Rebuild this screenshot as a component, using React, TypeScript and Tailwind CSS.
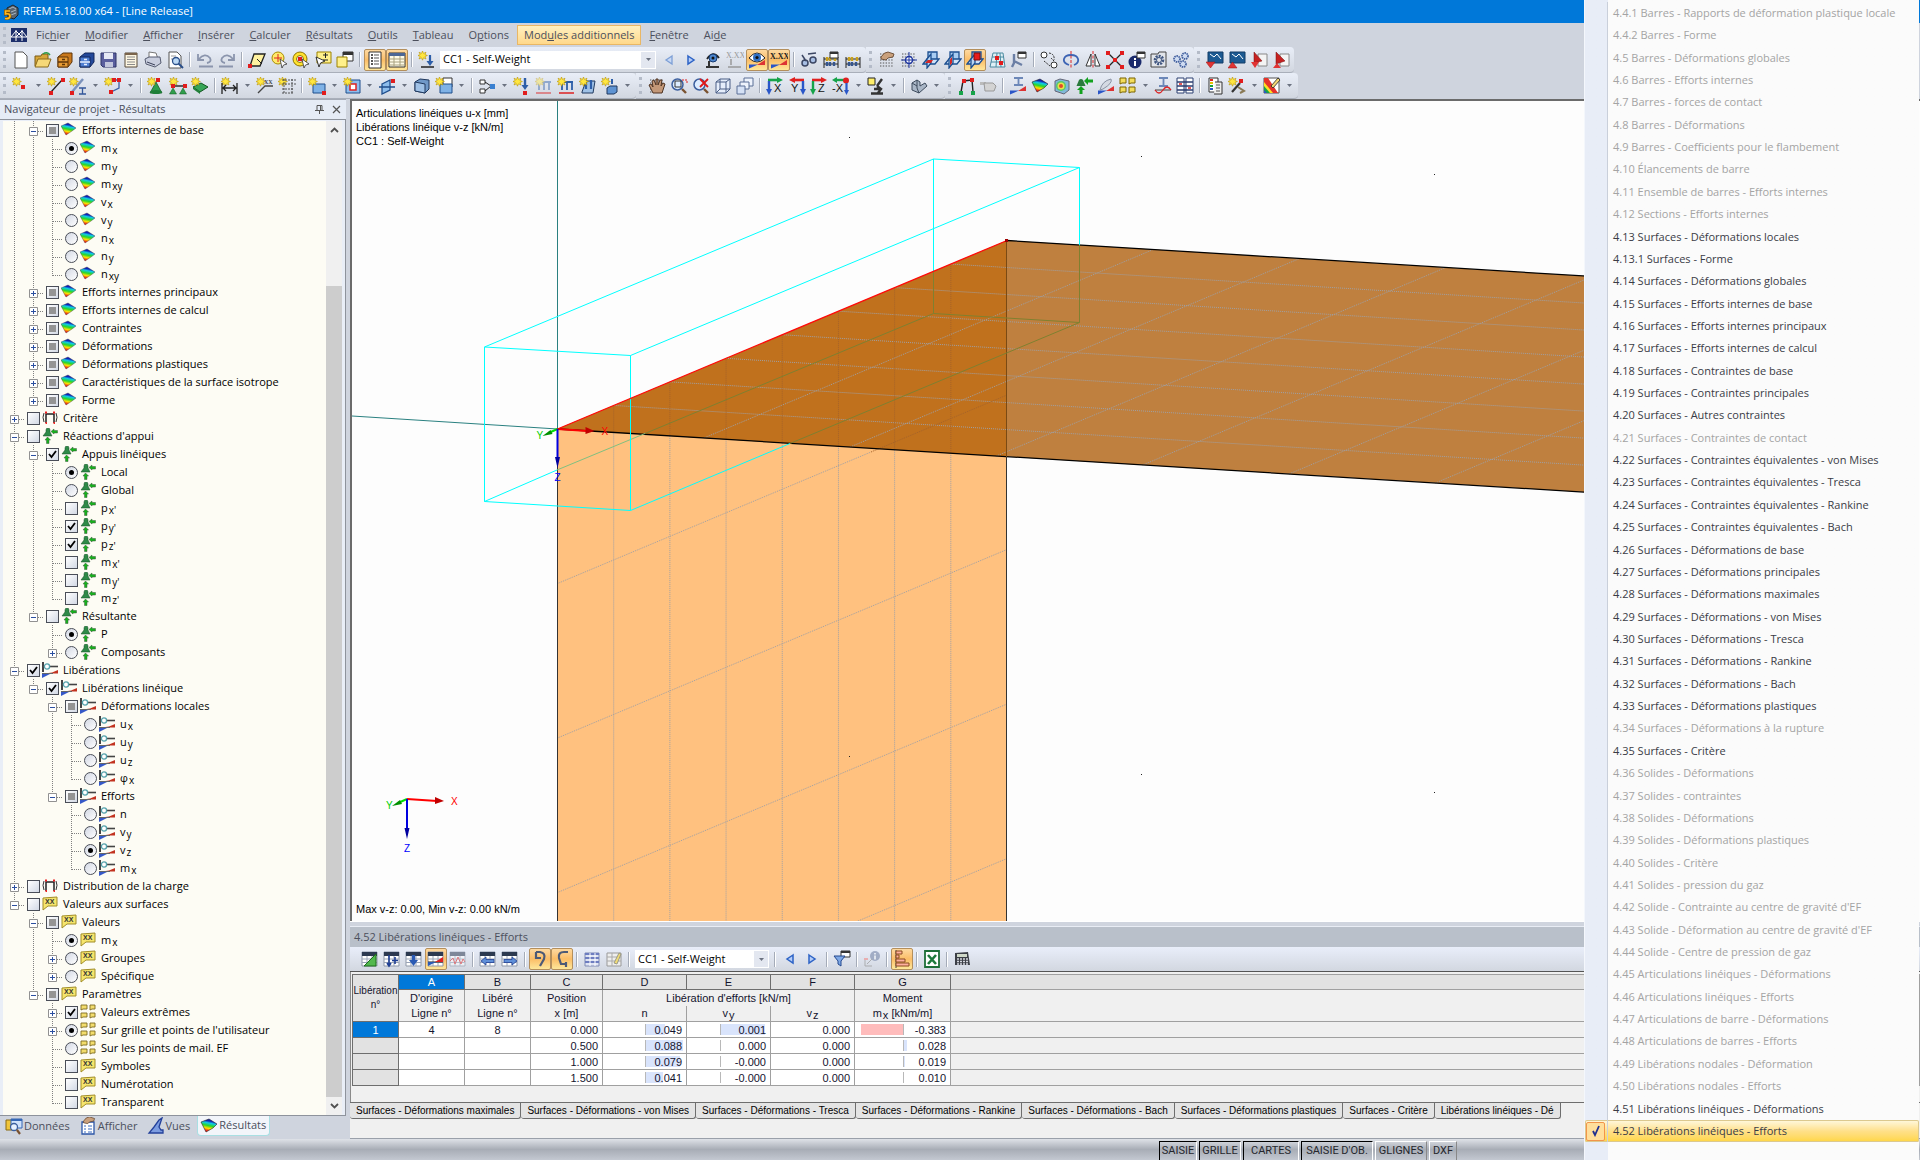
import React from 'react';
import clsx from 'clsx';

/* ---------- shared drawing bits ---------- */

const star = (
    <path d="M4.5 0l1 2.4L8 1.2 7 3.6 9.4 4.5 7 5.5 8 8 5.5 6.8 4.5 9.2 3.5 6.8 1 8 2.2 5.5 0 4.5l2.2-1L1 1.2l2.5 1.2z" fill="#ffe640" stroke="#b89400" strokeWidth=".6" />
);
const dot = (x: number, y: number, c = '#e11d1d') => <rect x={x} y={y} width="4" height="4" fill={c} />;
const page = <path d="M3 1h8l4 4v12H3z" fill="#fff" stroke="#555" />;
const dots = <path d="M2 3h14M2 6h14M2 9h14M2 12h14M2 15h14" stroke="#555" strokeWidth="1.2" strokeDasharray="1.4 1.4" />;
const hand = <path d="M3 6q3-5 7-5l6 2-1 3-5 1-2 2-5-1z" fill="#c9a07c" stroke="#5a3c26" strokeWidth=".8" />;
const lens = (
    <>
        <path d="M12 12l4 4" stroke="#7a5230" strokeWidth="2.4" />
        <circle cx="7.5" cy="7.5" r="5.5" fill="#dcecff" stroke="#3c5f9e" strokeWidth="1.500" />
    </>
);
const planes = (
    <>
        <path d="M6 1h9v9H6z" fill="#a9cdf2" stroke="#1c4f90" strokeWidth="1.300" />
        <path d="M1 13l4-5h12l-4 5z" fill="#cfe2f8" stroke="#1c4f90" strokeWidth="1.300" />
        <path d="M9 3L5 8v9l4-5z" fill="#b8d4f2" stroke="#1c4f90" strokeWidth="1.300" />
    </>
);
const tableBase = (
    <>
        <path d="M1 2h15v14H1z" fill="#fff" stroke="#8d97a8" />
        <path d="M1 2h15v4H1z" fill="#2c3950" />
        <path d="M1 9h15M1 12.500h15M6 6v10M11 6v10" stroke="#9aa4b6" />
    </>
);
const wall = (c: string, s: string) => <path d="M5 7h12v9H5z" fill={c} stroke={s} />;
const abacus = (
    <>
        <path d="M2 6v11M16 6v11M2 8h14M2 13h14" stroke="#222" fill="none" />
        <path d="M5 6v4M8 6v4M13 6v4" stroke="#c9a11b" strokeWidth="2.400" />
        <path d="M5 11v4M8 11v4M12 11v4" stroke="#35558e" strokeWidth="2.400" />
    </>
);
const bridge = <path d="M2 1h15v11H2z" fill="#1c5a92" stroke="#123c66" />;
const axisLetter = (letter: string, x: number) => (
    <text x={x} y="15" fontSize="11" fill="#111" fontFamily="Liberation Sans">{letter}</text>
);
const viewAxes = (letter: string, a: string, b: string) => (
    <>
        <path d="M2 3h10" stroke={a} strokeWidth="2.600" />
        <path d="M11 0l6 3-6 3z" fill={a} />
        <path d="M3 4v9" stroke={b} strokeWidth="2.400" />
        <path d="M0 12h6l-3 6z" fill={b} />
        {axisLetter(letter, 8)}
    </>
);
const supportCone = (
    <>
        <path d="M9 5l6 11H3z" fill="#2f9e4c" stroke="#11551f" strokeWidth=".7" />
        <ellipse cx="9" cy="15" rx="6" ry="2" fill="#1f7f38" />
    </>
);
const diag = (
    <>
        <path d="M1 14h8l8-5v5z" fill="#d33" />
        <path d="M1 13.500h9l-9 4z" fill="#2a55c8" />
    </>
);

const ICONS: Record<string, React.ReactNode> = {
    new: page,
    open: <><path d="M1 5h6l1-2h6v12H1z" fill="#d7a63a" stroke="#7a5b16" /><path d="M4 8h13l-3 8H1z" fill="#f6d878" stroke="#8a6a1c" /><path d="M9 3q4-3 7 1" fill="none" stroke="#2f9e4c" strokeWidth="1.500" /></>,
    block: <><path d="M2 6l5-4h9v9l-4 5H2z" fill="#c9781c" stroke="#5e3508" /><path d="M2 6h10v10H2z" fill="#e79b34" stroke="#5e3508" /><path d="M2 11h10M6 8.500h3M6 13.500h3" stroke="#5e3508" strokeWidth="1.300" /></>,
    blockBlue: <><path d="M2 6l5-4h9v9l-4 5H2z" fill="#23489a" stroke="#12265a" /><path d="M2 6h10v10H2z" fill="#4f7fd2" stroke="#12265a" /><path d="M2 11h10M6 8.500h3M6 13.500h3" stroke="#e8efff" strokeWidth="1.300" /></>,
    save: <><path d="M1 2h15v14H3l-2-2z" fill="#5a5f9e" stroke="#2f3468" /><path d="M4 2h9v6H4z" fill="#e6e9f5" /><path d="M5 11h8v5H5z" fill="#c2c6dc" /></>,
    notes: <><path d="M3 2h12v14H3z" fill="#fdf6e2" stroke="#594a38" /><path d="M3 2h12v2H3z" fill="#7a644c" /><path d="M5 6h8M5 8.500h8M5 11h8M5 13.500h8" stroke="#8b8b8b" /></>,
    print: <><path d="M5 1l7 1 2 6H5z" fill="#fff" stroke="#777" /><path d="M1 8l4-2h11l1 6-6 4-9-3z" fill="#c9cede" stroke="#555b70" /><path d="M3 11l8 3" stroke="#3a4058" /></>,
    preview: <>{page}<path d="M5 5h5M5 8h4" stroke="#999" /><circle cx="10" cy="10" r="3.500" fill="#bcd9f5" stroke="#2a4f8a" strokeWidth="1.300" /><path d="M12.500 12.500L17 17" stroke="#2a4f8a" strokeWidth="2" /></>,
    undo: <path d="M2 3v6h6M2.500 8.500Q9 1 14 7q2 4-3 5M3 15.500h14" fill="none" stroke="#8b95ad" strokeWidth="1.800" />,
    redo: <path d="M16 3v6h-6M15.500 8.500Q9 1 4 7q-2 4 3 5M1 15.500h14" fill="none" stroke="#8b95ad" strokeWidth="1.800" />,
    quad: <><path d="M6 3h11l-5 12H2z" fill="#fff2a0" stroke="#222" strokeWidth="1.300" />{dot(0, 13)}<path d="M9 8l5 5" stroke="#222" /></>,
    lasso: <><circle cx="8" cy="7" r="6" fill="#ffe96a" stroke="#a88b00" /><path d="M8 3v8M4 7h8" stroke="#d22" /><path d="M10 8l2 9 1.500-3 3.500-1z" fill="#fff" stroke="#333" strokeWidth=".8" /></>,
    ring: <><circle cx="8" cy="8" r="7" fill="#ffe22e" stroke="#8f7500" /><circle cx="8" cy="8" r="3.500" fill="#eef1f8" stroke="#8f7500" />{dot(6, 6)}<path d="M10 8l2 9 1.500-3 3.500-1z" fill="#fff" stroke="#333" strokeWidth=".8" /></>,
    pick: <><path d="M3 1h14v11H3z" fill="#fff08a" stroke="#9c8200" /><path d="M9 4h5M11.500 2v5M9 9h5" stroke="#222" /><path d="M2 6l3 10 1.500-4L11 10z" fill="#fff" stroke="#222" strokeWidth=".9" /></>,
    cascade: <><path d="M7 1h10v9H7z" fill="#fff" stroke="#333" /><path d="M7 1h10v3H7z" fill="#333" /><path d="M1 6h10v10H1z" fill="#fff08a" stroke="#9c8200" /></>,
    list: <><path d="M3 1h12v16H3z" fill="#fff" stroke="#333" /><path d="M5 4h2M5 7h2M5 10h2M5 13h2" stroke="#222" strokeWidth="1.600" /><path d="M8 4h5M8 7h5M8 10h5M8 13h5" stroke="#555" /></>,
    table: <><path d="M1 2h16v14H1z" fill="#fffbe6" stroke="#333" /><path d="M1 2h16v3H1z" fill="#4c6796" /><path d="M1 8h16M1 11h16M1 14h16M6 5v11M12 5v11" stroke="#a8a17e" /></>,
    loadNew: <>{star}<path d="M12 4v8" stroke="#2d5ea8" strokeWidth="2.200" /><path d="M8.500 10h7L12 15z" fill="#2d5ea8" /><path d="M3 16h13" stroke="#222" strokeWidth="1.500" /></>,
    prev: <path d="M12 5L6 9l6 4z" fill="#c8d9f5" stroke="#7d9fd6" strokeWidth="1.300" />,
    next: <path d="M6 5l6 4-6 4z" fill="#b5cdf8" stroke="#2d63c6" strokeWidth="1.500" />,
    prevBlue: <path d="M12 5L6 9l6 4z" fill="#b5cdf8" stroke="#2d63c6" strokeWidth="1.500" />,
    eyeLoad: <><path d="M3 8q6-9 12-1" fill="none" stroke="#222" strokeWidth="1.800" /><circle cx="9" cy="7" r="4" fill="#4d86ce" stroke="#153a70" /><circle cx="9" cy="7" r="1.500" fill="#111" /><path d="M5 10v6M2 16h13" stroke="#333" strokeWidth="2" /></>,
    xxGrey: <><text x="0" y="7" fontSize="8" fill="#999" fontFamily="Liberation Serif">X.XX</text><path d="M5 8v6M2 16h13" stroke="#999" strokeWidth="1.500" /></>,
    eye: <><path d="M1 7q8-10 16 0-8 8-16 0z" fill="#fff" stroke="#222" /><circle cx="9" cy="6.500" r="4" fill="#2f6fc4" /><circle cx="9" cy="6.500" r="1.600" fill="#111" />{diag}</>,
    xx: <><text x="0" y="8" fontSize="8" fontWeight="700" fill="#222" fontFamily="Liberation Serif">X.XX</text>{diag}</>,
    glasses: <path d="M2 4l4 6M8 3l8-1M2 12a3 3 0 1 0 6 0a3 3 0 1 0-6 0M10 9a3 3 0 1 0 6 0a3 3 0 1 0-6 0" fill="#a8bfe4" stroke="#3b4663" strokeWidth="1.500" />,
    abacusWin: <>{abacus}<path d="M8 1h8v6H8z" fill="#fff" stroke="#333" /><path d="M8 2h8" stroke="#333" strokeWidth="2" /></>,
    abacus,
    handGrid: <>{dots}{hand}</>,
    snap: <>{dots}<circle cx="9" cy="9" r="3.500" fill="#fff" stroke="#1e36a0" strokeWidth="1.500" /><path d="M9 1v16M1 9h16" stroke="#1e36a0" /></>,
    planeXY: <>{planes}<path d="M3 12l3-3h5l-2 3z" fill="#d42626" /></>,
    planeXZ: <>{planes}<path d="M8 6L6 8.500v6L8 12z" fill="#d42626" /></>,
    planeYZ: <>{planes}<path d="M8 2h6v7H8z" fill="#e81c1c" stroke="#7a1010" /></>,
    raster: <><path d="M5 2h10l2 14H2z" fill="#dff0f6" stroke="#4a8aa0" /><path d="M4 6h12M3 11h13M9 2L8 16M12 2l1 14" stroke="#4a8aa0" />{dot(7, 5)}{dot(11, 10)}</>,
    tools: <><path d="M8 1h8v6H8z" fill="#fff" stroke="#333" /><path d="M8 2h8" stroke="#333" strokeWidth="2" /><path d="M4 3v9l-2 4M4 10l8 4" fill="none" stroke="#6b7fa5" strokeWidth="2.400" /></>,
    move: <><circle cx="4" cy="4" r="3" fill="#fff" stroke="#333" /><circle cx="14" cy="14" r="3" fill="#fff" stroke="#333" /><path d="M9 2q6 1 5 7M14 10l-3-3M4 10l6 5" fill="none" stroke="#333" strokeDasharray="2 1" /></>,
    rotate: <><path d="M7 14Q1 12 2 8t7-4 7 4-4 6" fill="none" stroke="#3d64b4" strokeWidth="1.800" /><path d="M9 0v18" stroke="#d22" strokeDasharray="3 1.500" /></>,
    mirror: <><path d="M7 3v12H2zM11 3v12h5z" fill="#fff" stroke="#333" /><path d="M9 0v18" stroke="#d22" strokeDasharray="3 1.500" /></>,
    explode: <><path d="M2 2l14 14M16 2L2 16" stroke="#222" strokeWidth="1.300" />{dot(0, 0)}{dot(14, 0)}{dot(0, 14)}{dot(14, 14)}{dot(7, 7)}</>,
    info: <><circle cx="7" cy="11" r="6.500" fill="#1a2a6c" /><path d="M9 1h8v6H9z" fill="#fff" stroke="#333" /><path d="M9 2h8" stroke="#333" strokeWidth="2" /><path d="M7 7v2M7 10v5" stroke="#fff" strokeWidth="2" /></>,
    gearBox: <><path d="M1 3h7l1-2h7v15H1z" fill="#e2e5ea" stroke="#444" /><circle cx="9" cy="9" r="4" fill="none" stroke="#3f5580" strokeWidth="2.600" strokeDasharray="2 1" /><circle cx="9" cy="9" r="2.500" fill="none" stroke="#3f5580" /></>,
    gears: <g fill="#cfdcf2" stroke="#4562a0" strokeWidth="1.800" strokeDasharray="1.500 .7"><circle cx="5" cy="8" r="3" /><circle cx="13" cy="5" r="3" /><circle cx="11" cy="13" r="3" /></g>,
    exportDown: <>{bridge}<path d="M4 3l4 3 3-3 4 5" stroke="#fff" fill="none" /><path d="M0 11h9l-4.500 6z" fill="#e03434" stroke="#911" strokeWidth=".5" /></>,
    exportUp: <>{bridge}<path d="M4 3l4 3 3-3 4 5" stroke="#fff" fill="none" /><path d="M0 17h9l-4.500-6z" fill="#e03434" stroke="#911" strokeWidth=".5" /></>,
    pdfDown: <><path d="M8 3h9v12H8z" fill="#f4f4f4" stroke="#888" /><path d="M4 1l8 9-8 2z" fill="#c62121" stroke="#711" strokeWidth=".5" /><path d="M1 11h8l-4 6z" fill="#e03434" /></>,
    pdfUp: <><path d="M8 3h9v12H8z" fill="#f4f4f4" stroke="#888" /><path d="M4 1l9 9-9 3z" fill="#c62121" stroke="#711" strokeWidth=".5" /><path d="M1 17h8l-4-5z" fill="#e03434" /></>,

    node: <>{star}{dot(9, 8)}</>,
    line: <>{star}<path d="M4 15L15 3" stroke="#222" strokeWidth="1.300" />{dot(2, 14)}{dot(14, 1)}</>,
    member: <>{star}<path d="M3 15L14 2" stroke="#7b92bb" strokeWidth="2.500" />{dot(1, 14)}<path d="M10 11h7M13.500 11v6M10 17h7" stroke="#33579a" strokeWidth="1.300" /></>,
    polyline: <>{star}<path d="M10 3h5v8l-8 4" fill="none" stroke="#3a5fa5" strokeWidth="1.300" />{dot(8, 1)}{dot(13, 1)}{dot(5, 13)}</>,
    nodeSupport: <>{supportCone}{star}{dot(9, 1)}</>,
    lineSupport: <>{star}<path d="M4 9h12" stroke="#222" strokeWidth="1.400" />{dot(2, 7)}{dot(14, 7)}<path d="M4 11l3.500 6h-7zM14 11l3.500 6h-7z" fill="#2f9e4c" stroke="#12561f" strokeWidth=".5" /></>,
    surfSupport: <><path d="M2 10l8-4 7 4-8 5z" fill="#37a556" stroke="#12561f" /><path d="M2 10v2l7 5v-2z" fill="#1f7f38" />{star}</>,
    dimension: <>{star}<path d="M1 6v11M16 6v11M2 11h13M5 8l-3 3 3 3M12 8l3 3-3 3" fill="none" stroke="#222" strokeWidth="1.300" /></>,
    comment: <>{star}<text x="8" y="7" fontSize="6" fontWeight="700" fill="#444" fontFamily="Liberation Serif">XX</text><path d="M2 16L9 9h8" fill="none" stroke="#444" strokeWidth="1.300" /></>,
    guide: <>{star}<path d="M4 3h14M4 7h14M4 12h12M4 16h12M6 2v15M14 2v15" stroke="#444" strokeWidth=".9" strokeDasharray="2 1" /></>,
    surface: <>{wall('#7fb2e6', '#1f4e8c')}{dot(14, 14)}{star}</>,
    opening: <><path d="M3 3h14v13H3z" fill="#8dbdec" stroke="#1f4e8c" /><path d="M7 7h6v6H7z" fill="#fff" stroke="#d22" strokeWidth="1.500" />{star}</>,
    intersect: <><path d="M1 10h16M4 7l8-4v10l-8 4z" fill="#8dbdec" stroke="#1f4e8c" strokeWidth="1.300" />{dot(13, 2)}</>,
    solid: <><path d="M2 5l5-3 9 1v9l-4 4-10-2z" fill="#6f98c8" stroke="#20395e" /><path d="M2 5l10 2v9L2 14z" fill="#9fc1e6" stroke="#20395e" /></>,
    solidSet: <><path d="M8 1h9v9H8z" fill="#fff" stroke="#333" />{wall('#7fb2e6', '#1f4e8c')}{star}</>,
    release: <><path d="M2 3h5v4H2zM2 12h5v4H2z" fill="#fff" stroke="#333" /><path d="M7 5l6 4-6 5" fill="none" stroke="#222" /><path d="M12 7h5v5h-5z" fill="#3a80d0" /></>,
    nodeLoad: <>{star}<path d="M12 1v8" stroke="#2d5ea8" strokeWidth="2.400" /><path d="M8.500 8h7L12 13z" fill="#2d5ea8" />{dot(10, 14)}</>,
    memberLoadGrey: <g opacity=".45"><path d="M2 5h14M4 5v8M9 5v8M14 5v8" stroke="#2d5ea8" strokeWidth="1.800" /><path d="M1 16h15" stroke="#d22" strokeWidth="2" />{star}</g>,
    memberLoad: <><path d="M3 5h13M5 5v8M10 5v8M15 5v8" stroke="#2d5ea8" strokeWidth="1.800" /><path d="M2 16h15" stroke="#d22" strokeWidth="1.500" />{star}</>,
    surfLoad: <><path d="M3 15l4-11h9l-2 12H3z" fill="#9fc1e6" stroke="#20395e" /><path d="M7 3v9M12 3v9" stroke="#2d5ea8" strokeWidth="2.200" />{star}</>,
    solidLoad: <><path d="M6 11l3-2h7v6l-3 2H6z" fill="#5e93d2" stroke="#20395e" />{star}<path d="M11 2v5" stroke="#2d5ea8" strokeWidth="2" /></>,
    pan: <>{dots}<path d="M5 16l-4-8 2-1 2 3-1-6 2-1 2 5V2h2v6l2-5h2l-1 6 2-3 2 1-3 9z" fill="#c39878" stroke="#4e3322" /></>,
    zoomWin: <>{lens}<path d="M5 4h6v6H5z" fill="none" stroke="#333" /><path d="M12 3h5v4" fill="none" stroke="#d22" strokeDasharray="2 1" /></>,
    zoomOff: <>{lens}<path d="M8 2l8 8M16 2L8 10" stroke="#e01818" strokeWidth="1.800" /></>,
    box: <><path d="M2 5l4-3h10v10l-4 4H2z" fill="#e6eefb" stroke="#4a5f86" /><path d="M2 5h10v11M12 5l4-3M6 2v10l-4 4M6 12h10" fill="none" stroke="#4a5f86" /></>,
    boxes: <><path d="M8 1h9v8H8z" fill="#eef3fc" stroke="#5a6f96" /><path d="M4 5h9v7H4z" fill="#eef3fc" stroke="#5a6f96" /><path d="M1 9h8v8H1z" fill="#d5e1f5" stroke="#5a6f96" /></>,
    viewX: viewAxes('X', '#17a34a', '#2b57c8'),
    viewY: (
        <>
            <path d="M6 3h10" stroke="#e02020" strokeWidth="2.600" />
            <path d="M7 0L1 3l6 3z" fill="#e02020" />
            <path d="M15 4v9" stroke="#2b57c8" strokeWidth="2.400" />
            <path d="M12 12h6l-3 6z" fill="#2b57c8" />
            {axisLetter('Y', 3)}
        </>
    ),
    viewZ: viewAxes('Z', '#e02020', '#17a34a'),
    viewMX: (
        <>
            <path d="M3 3h9" stroke="#17a34a" strokeWidth="2.400" />
            <path d="M5 0L0 3l5 3z" fill="#17a34a" />
            <circle cx="14" cy="3.500" r="3" fill="#e02020" />
            <path d="M14.500 6v8" stroke="#2b57c8" strokeWidth="2.200" />
            <path d="M12 13h5l-2.500 5z" fill="#2b57c8" />
            {axisLetter('-X', 0)}
        </>
    ),
    microscope: <><path d="M1 1h7v7H1z" fill="#ffef6a" stroke="#222" /><path d="M15 2l-5 7M10 9l4 3-3 4M4 16.500h12M7 12h6" fill="none" stroke="#333" strokeWidth="2.400" /></>,
    part: <><path d="M2 6l5-3 3 2v4l5-3 2 3-8 7-7-3z" fill="#a9b6c6" stroke="#3d4a5c" /><path d="M7 3v8l2 5M2 6l5 3" fill="none" stroke="#3d4a5c" /></>,
    frame: <><path d="M4 15L6 4l9-1 1 12" fill="none" stroke="#222" strokeWidth="1.400" />{dot(5, 2)}{dot(13, 1)}{dot(2, 14, '#17a34a')}{dot(14, 14, '#17a34a')}</>,
    stone: <><path d="M1 5h6v3H1z" fill="#bbb" /><path d="M5 6h9l3 3-2 5H6z" fill="#d3d3d3" stroke="#999" /></>,
    beamResult: <><path d="M5 1h9M9.500 1v7M5 8h9" stroke="#6c87b8" strokeWidth="1.800" />{diag}</>,
    surfResult: <path d="M1 5l8-3 8 5-4 4-7 4z" fill="url(#rainbow)" stroke="#222" strokeWidth=".6" />,
    solidResult: <><path d="M2 4l5-2 9 2v9l-5 4-9-3z" fill="#7fb8d8" stroke="#667" /><circle cx="8" cy="9" r="5" fill="#57c96a" /><circle cx="8" cy="9" r="3.500" fill="#e9e24a" /><circle cx="8" cy="9" r="2" fill="#e04a2a" /></>,
    supportRes: <><path d="M4 3a2.500 2.500 0 0 1 4 0l2.500 6h-9z" fill="#2b7a3e" /><path d="M12 4h6M6 17v-4" stroke="#13a11f" strokeWidth="3" /><path d="M6 9l4 4H2zM9 4l4-4v8z" fill="#13a11f" /></>,
    section: <><path d="M3 13Q5 4 14 2q2 4-8 10z" fill="#d5dae3" stroke="#8a93a3" />{diag}</>,
    tags4: <g fill="#f3dd5c" stroke="#7a6500"><path d="M1 1h6v5H3l-2 1zM10 1h6v5h-4l-2 1zM1 10h6v5H3l-2 1zM10 10h6v5h-4l-2 1z" /></g>,
    beamWave: <><path d="M5 1h9M9.500 1v8M5 9h9" stroke="#6c87b8" strokeWidth="1.800" /><path d="M1 13h16" stroke="#444" /><path d="M1 13q4 6 8 0t8 0" fill="none" stroke="#d22" strokeWidth="1.300" /></>,
    compare: <><path d="M1 1h7v15H1zM10 1h7v15h-7z" fill="#fff" stroke="#2b3e70" /><path d="M1 5h16M1 9h16M1 13h16" stroke="#2b3e70" strokeWidth="1.500" /><path d="M3 7h3M12 11h3" stroke="#d22" strokeWidth="1.500" /></>,
    colorPanel: <><path d="M3 1h9v14H3z" fill="#fff" stroke="#333" /><path d="M4 3h3" stroke="#d22" strokeWidth="2" /><path d="M4 6h3" stroke="#e6c200" strokeWidth="2" /><path d="M4 9h3" stroke="#19a33c" strokeWidth="2" /><path d="M4 12h3" stroke="#2b57c8" strokeWidth="2" /><path d="M9 5h7v12H8" fill="#eee" stroke="#333" /><path d="M10 8h4M10 11h4M10 14h4" stroke="#555" /></>,
    wizard: <>{star}<path d="M4 15l8-9" stroke="#333" strokeWidth="2.200" /><path d="M10 10l6 4-4 2" stroke="#8a7a55" strokeWidth="2" fill="none" />{dot(11, 2)}</>,
    palette: <><path d="M1 1h15v15H1z" fill="#fff" stroke="#555" /><path d="M1 1h4l10 15H1z" fill="#e6332a" /><path d="M1 5l9 11H1z" fill="#ffe023" /><path d="M1 9l6 7H1z" fill="#17a34a" /><path d="M1 13l3 3H1z" fill="#2b57c8" /><path d="M8 9l7-8 2 2-7 8z" fill="#f4d774" stroke="#222" strokeWidth=".8" /></>,

    tGreen: <>{tableBase}<path d="M3 16L15 4v12z" fill="#52b84e" stroke="#1c6d1d" /></>,
    tSplit: <>{tableBase}<path d="M6 5v11M12 7v7M9 10.500h6M4 13l2 3 2-3" fill="none" stroke="#1f3f94" strokeWidth="1.600" /></>,
    tDown: <>{tableBase}<path d="M8.500 5v6" stroke="#2a5ab4" strokeWidth="3.400" /><path d="M4 10h9l-4.500 6z" fill="#2a5ab4" /></>,
    tDiag: <>{tableBase}<path d="M1 12h15" stroke="#222" /><path d="M8 12l8-5v5z" fill="#d22" /><path d="M1 12h8l-8 4z" fill="#2a5ab4" /></>,
    tWave: <g opacity=".55">{tableBase}<path d="M1 11l3-3 2 6 3-7 3 7 2-5 2 3" fill="none" stroke="#d22" /></g>,
    tLeft: <>{tableBase}<path d="M2 11l5-4v2.500h8v3H7V15z" fill="#5f8fd8" stroke="#1f3f94" strokeWidth=".8" /></>,
    tRight: <>{tableBase}<path d="M16 11l-5-4v2.500H3v3h8V15z" fill="#5f8fd8" stroke="#1f3f94" strokeWidth=".8" /></>,
    hookR: <path d="M5 2h4q6 1 4 7l-4 7M5 2v6h5" fill="none" stroke="#4d5a76" strokeWidth="2.200" />,
    hookL: <path d="M15 2h-4q-6 0-5 6l2 6h5M13 17v-5" fill="none" stroke="#4d5a76" strokeWidth="2.200" />,
    tRows: <><path d="M2 3h14v13H2z" fill="#dfe4f3" stroke="#7f8ab4" /><path d="M2 4h14M2 8h14M2 12h14" stroke="#6d7dc0" strokeWidth="2" /><path d="M7 3v13M12 3v13" stroke="#fff" /></>,
    tEdit: <><path d="M2 3h14v13H2z" fill="#eee" stroke="#999" /><path d="M2 7h14M2 11h14M7 3v13" stroke="#aaa" /><path d="M9 13l5-10 2 1-4 10z" fill="#f1dc76" stroke="#998" /></>,
    filter: <><path d="M8 1h9v6H8z" fill="#fff" stroke="#333" /><path d="M8 2h9" stroke="#333" strokeWidth="2" /><path d="M1 6h11l-4 5v5l-3-2v-3z" fill="#7ea8e6" stroke="#24488e" /></>,
    infoGrey: <g opacity=".7"><circle cx="12" cy="6" r="5" fill="#8795b3" /><path d="M12 3v1.500M12 5.500v4" stroke="#fff" strokeWidth="1.500" /><path d="M2 9v7h7M4 14l5-5" fill="none" stroke="#999" /><path d="M1 9h4" stroke="#e99" strokeWidth="2" /></g>,
    bars: <><path d="M3 0v18" stroke="#444" /><path d="M3 1h6v3H3zM3 5h3v3H3zM3 9h9v3H3zM3 13h13v3H3z" fill="#ffb0a0" stroke="#8a4a20" /></>,
    excel: <><path d="M2 1h14v16H2z" fill="#fff" stroke="#1d6f38" strokeWidth="1.800" /><path d="M5 5l8 9M13 5l-8 9" stroke="#1d7a3c" strokeWidth="2.600" /></>,
    calc: <><path d="M2 3l13-1 2 13H2z" fill="#3c3f46" /><path d="M4 4h10v3H4z" fill="#cfd8c8" /><path d="M4 9h11M4 11.500h11M4 14h11" stroke="#d5d8df" strokeWidth="1.400" strokeDasharray="2 1" /></>,

    tabData: <><path d="M1 3h6l1 2h4v8H1z" fill="#f0c53a" stroke="#8a6a12" /><path d="M6 2h11v9H6z" fill="#cfe2fb" stroke="#3567b5" /><path d="M6 3h11" stroke="#3567b5" strokeWidth="2" /><circle cx="9" cy="10" r="3.500" fill="#e6f1ff" stroke="#3c5f9e" strokeWidth="1.300" /><path d="M12 13l3 4" stroke="#7a5230" strokeWidth="2.200" /></>,
    tabShow: <><path d="M3 5h12v12H3z" fill="#fff" stroke="#2c56a8" strokeWidth="1.300" /><path d="M5 9h2M5 12h2M5 15h2M9 9h4M9 12h4M9 15h4" stroke="#3b6cc2" /><g transform="translate(2 -1) scale(.85)">{hand}</g></>,
    tabViews: <path d="M15 1l-3 9 2 3h2v3H2l5-6 5-7zM2 16h14" fill="#7c9ce0" stroke="#23409a" strokeWidth="1.300" />,
};

/* ---------- toolbar ---------- */

const ToolIcon: React.FC<{ name: string }> = ({ name }) => (
    <svg viewBox="0 0 18 18" className="size-[18px] shrink-0" aria-hidden="true">{ICONS[name]}</svg>
);

// "|" separator, "v" drop arrow, leading "*" marks a pressed button
const Tools: React.FC<{ items: string }> = ({ items }) => (
    <>
        {items.split(' ').map((item, i) => {
            if (item === '|') return <span key={i} className="mx-[3px] h-[15px] w-[2px] shrink-0 border-l border-[#a4abb8] bg-white" />;
            if (item === 'v') {
                return (
                    <button key={i} aria-label="Plus" className="flex h-[22px] w-[13px] shrink-0 items-center justify-center">
                        <svg viewBox="0 0 5 3" className="h-[3px] w-[5px]"><path d="M0 0h5L2.500 3z" fill="#6b7280" /></svg>
                    </button>
                );
            }
            const pressed = item.startsWith('*');
            const name = item.replace('*', '');
            return (
                <button
                    key={i}
                    aria-label={name}
                    className={clsx(
                        'flex h-[22px] w-[22px] shrink-0 items-center justify-center',
                        pressed && 'rounded-[2px] border border-[#b48f5c] bg-linear-to-b from-[#fdd9a0] via-[#fbbd66] to-[#fde79a]',
                    )}
                >
                    <ToolIcon name={name} />
                </button>
            );
        })}
    </>
);

const Grip = () => <span className="ml-[3px] mr-[4px] h-[17px] w-[3px] shrink-0 border-l-[3px] border-dotted border-[#b4bbc8]" />;

const Bar: React.FC<{ children: React.ReactNode }> = ({ children }) => (
    <div className="flex h-[26px] items-center rounded-r border-b border-[#a9afba] bg-linear-to-b from-[#e9eef8] to-[#d2d7e0] pr-[2px]">
        <Grip />
        {children}
    </div>
);

const CasePicker: React.FC<{ className: string }> = ({ className }) => (
    <div className={clsx('grid h-[18px] shrink-0 items-center bg-white', className)}>
        <select aria-label="Cas de charge" className="[grid-area:1/1] h-[18px] w-full appearance-none bg-transparent pl-[3px] text-[11px] text-black">
            <option>CC1 - Self-Weight</option>
        </select>
        <span className="pointer-events-none [grid-area:1/1] mr-px flex h-4 w-[14px] items-center justify-center justify-self-end bg-[#e3e7f0]">
            <svg viewBox="0 0 5 3" className="h-[3px] w-[5px]"><path d="M0 0h5L2.500 3z" fill="#6b7280" /></svg>
        </span>
    </div>
);

/* ---------- menu bar ---------- */

const MENUS: [string, string, string][] = [
    ['Fic', 'h', 'ier'],
    ['', 'M', 'odifier'],
    ['', 'A', 'fficher'],
    ['', 'I', 'nsérer'],
    ['', 'C', 'alculer'],
    ['', 'R', 'ésultats'],
    ['', 'O', 'utils'],
    ['', 'T', 'ableau'],
    ['O', 'p', 'tions'],
    ['Mod', 'u', 'les additionnels'],
    ['', 'F', 'enêtre'],
    ['Ai', 'd', 'e'],
];

const Header = () => (
    <header>
        <div className="flex h-[23px] items-center gap-1 bg-[#0078d9] pl-[3px] text-[11px] text-white">
            <svg viewBox="0 0 16 16" className="size-4">
                <path d="M4 4l6-3 5 3v7l-4 4-6-2z" fill="#58646f" stroke="#1c242c" />
                <path d="M6 5l4-2 3 2M8 8l5-2M8 11l5-2" stroke="#a9b6c2" fill="none" />
                <path d="M7 7H2.500v3Q7 9 7 12t-5 2.500" fill="none" stroke="#7a4c00" strokeWidth="3" />
                <path d="M7 7H2.500v3Q7 9 7 12t-5 2.500" fill="none" stroke="#ffb91f" strokeWidth="1.700" />
            </svg>
            <h1>RFEM 5.18.00 x64 - [Line Release]</h1>
        </div>
        <nav className="flex h-6 items-center gap-px bg-[#cfd4de] text-[11px] text-[#4b4f5c]">
            <Grip />
            <svg viewBox="0 0 16 14" className="mr-[1px] h-[14px] w-4">
                <path d="M0 0h16v14H0z" fill="#1d2f6b" />
                <path d="M0 9h16M5 2v11M11 2v11M5 3L0 9M5 3l6 6M11 3L5 9M11 3l5 6" stroke="#fff" fill="none" />
            </svg>
            {MENUS.map(([before, key, after]) => (
                <button
                    key={before + key + after}
                    className={clsx(
                        'h-[20px] border px-[6px] whitespace-nowrap',
                        before === 'Mod' ? 'border-[#e9b765] bg-linear-to-b from-[#fff0c0] to-[#ffd88a]' : 'border-transparent',
                    )}
                >
                    {before}<u>{key}</u>{after}
                </button>
            ))}
        </nav>
        <div className="bg-[#cfd4de]">
            <div className="flex">
                <Bar>
                    <Tools items="new open block blockBlue save notes print preview | undo redo | quad lasso ring pick cascade | *list *table | loadNew" />
                    <CasePicker className="mx-[2px] w-[216px]" />
                    <Tools items="prev next eyeLoad xxGrey *eye *xx | glasses abacusWin abacus" />
                </Bar>
                <Bar>
                    <Tools items="handGrid snap planeXY planeXZ *planeYZ raster tools | move rotate mirror explode info gearBox gears" />
                </Bar>
                <Bar>
                    <Tools items="exportDown exportUp pdfDown pdfUp" />
                </Bar>
            </div>
            <div className="flex">
                <Bar>
                    <Tools items="node v line member v polyline v | nodeSupport lineSupport surfSupport | dimension v comment guide | surface v opening v intersect v solid solidSet v | release v nodeLoad memberLoadGrey memberLoad surfLoad solidLoad v" />
                </Bar>
                <Bar>
                    <Tools items="pan zoomWin zoomOff box boxes | viewX viewY viewZ viewMX v microscope v | part v" />
                </Bar>
                <Bar>
                    <Tools items="frame stone | beamResult surfResult solidResult supportRes section tags4 v beamWave compare | colorPanel wizard v palette v" />
                </Bar>
            </div>
        </div>
    </header>
);

/* ---------- navigator tree ---------- */

type Row = {
    d: number;
    text: string;
    sub?: string;
    kind: 'check' | 'radio';
    state?: 'on' | 'mixed';
    icon: 'surface' | 'frame' | 'support' | 'release' | 'tag' | 'tags';
    exp?: '+' | '-';
};

const row = (d: number, exp: string, kind: string, icon: Row['icon'], text: string, sub?: string): Row => ({
    d,
    text,
    sub,
    icon,
    exp: exp === ' ' ? undefined : (exp as '+' | '-'),
    kind: kind[0] === 'r' ? 'radio' : 'check',
    state: kind[1] === '1' ? 'on' : kind[1] === '~' ? 'mixed' : undefined,
});

const TREE: Row[] = [
    row(1, '-', 'c~', 'surface', 'Efforts internes de base'),
    row(2, ' ', 'r1', 'surface', 'm', 'x'),
    row(2, ' ', 'r', 'surface', 'm', 'y'),
    row(2, ' ', 'r', 'surface', 'm', 'xy'),
    row(2, ' ', 'r', 'surface', 'v', 'x'),
    row(2, ' ', 'r', 'surface', 'v', 'y'),
    row(2, ' ', 'r', 'surface', 'n', 'x'),
    row(2, ' ', 'r', 'surface', 'n', 'y'),
    row(2, ' ', 'r', 'surface', 'n', 'xy'),
    row(1, '+', 'c~', 'surface', 'Efforts internes principaux'),
    row(1, '+', 'c~', 'surface', 'Efforts internes de calcul'),
    row(1, '+', 'c~', 'surface', 'Contraintes'),
    row(1, '+', 'c~', 'surface', 'Déformations'),
    row(1, '+', 'c~', 'surface', 'Déformations plastiques'),
    row(1, '+', 'c~', 'surface', 'Caractéristiques de la surface isotrope'),
    row(1, '+', 'c~', 'surface', 'Forme'),
    row(0, '+', 'c', 'frame', 'Critère'),
    row(0, '-', 'c', 'support', "Réactions d'appui"),
    row(1, '-', 'c1', 'support', 'Appuis linéiques'),
    row(2, ' ', 'r1', 'support', 'Local'),
    row(2, ' ', 'r', 'support', 'Global'),
    row(2, ' ', 'c', 'support', 'p', "x'"),
    row(2, ' ', 'c1', 'support', 'p', "y'"),
    row(2, ' ', 'c1', 'support', 'p', "z'"),
    row(2, ' ', 'c', 'support', 'm', "x'"),
    row(2, ' ', 'c', 'support', 'm', "y'"),
    row(2, ' ', 'c', 'support', 'm', "z'"),
    row(1, '-', 'c', 'support', 'Résultante'),
    row(2, ' ', 'r1', 'support', 'P'),
    row(2, '+', 'r', 'support', 'Composants'),
    row(0, '-', 'c1', 'release', 'Libérations'),
    row(1, '-', 'c1', 'release', 'Libérations linéique'),
    row(2, '-', 'c~', 'release', 'Déformations locales'),
    row(3, ' ', 'r', 'release', 'u', 'x'),
    row(3, ' ', 'r', 'release', 'u', 'y'),
    row(3, ' ', 'r', 'release', 'u', 'z'),
    row(3, ' ', 'r', 'release', 'φ', 'x'),
    row(2, '-', 'c~', 'release', 'Efforts'),
    row(3, ' ', 'r', 'release', 'n'),
    row(3, ' ', 'r', 'release', 'v', 'y'),
    row(3, ' ', 'r1', 'release', 'v', 'z'),
    row(3, ' ', 'r', 'release', 'm', 'x'),
    row(0, '+', 'c', 'frame', 'Distribution de la charge'),
    row(0, '-', 'c', 'tag', 'Valeurs aux surfaces'),
    row(1, '-', 'c~', 'tag', 'Valeurs'),
    row(2, ' ', 'r1', 'tag', 'm', 'x'),
    row(2, '+', 'r', 'tag', 'Groupes'),
    row(2, '+', 'r', 'tag', 'Spécifique'),
    row(1, '-', 'c~', 'tag', 'Paramètres'),
    row(2, '+', 'c1', 'tags', 'Valeurs extrêmes'),
    row(2, '+', 'r1', 'tags', "Sur grille et points de l'utilisateur"),
    row(2, ' ', 'r', 'tags', 'Sur les points de mail. EF'),
    row(2, ' ', 'c', 'tag', 'Symboles'),
    row(2, ' ', 'c', 'tag', 'Numérotation'),
    row(2, ' ', 'c', 'tag', 'Transparent'),
];

// does the branch at this level go on below the given row?
const continues = (index: number, level: number) => {
    const next = TREE.slice(index + 1).find((r) => r.d <= level);
    return next !== undefined && next.d === level;
};

// radios share a group with the siblings under the same parent
const groupOf = (index: number) => {
    for (let i = index - 1; i >= 0; i--) if (TREE[i].d < TREE[index].d) return `g${i}`;
    return 'g';
};

const TREE_ICONS: Record<Row['icon'], React.ReactNode> = {
    surface: <path d="M0 4l7-3 8 5-4 3-6 4z" fill="url(#rainbow)" stroke="#333" strokeWidth=".4" />,
    frame: (
        <>
            <path d="M4 13V4h8v9" fill="none" stroke="#222" strokeWidth="1.500" />
            <path d="M3 2.500h2M11 2.500h2M3.500 13h1.500M11.500 13h1.500" stroke="#e22" strokeWidth="2" />
            <path d="M2 3Q0 7 2 12M14 3q2 4 0 9" fill="none" stroke="#333" />
        </>
    ),
    support: (
        <>
            <path d="M4 2a2 2 0 0 1 4 0l0 2 2 4H1l3-4z" fill="#2f8a48" stroke="#174c26" strokeWidth=".5" />
            <path d="M9 3.500l3-2.500v1.500h3.500v2.500H12V6z" fill="#16b11c" stroke="#3f5a3f" strokeWidth=".5" />
            <path d="M5.500 9l3 3H7v3.500H4.500V12H3z" fill="#16b11c" stroke="#3f5a3f" strokeWidth=".5" />
        </>
    ),
    release: (
        <>
            <path d="M1 0v10" stroke="#444" strokeWidth="2" />
            <path d="M8 4.500h8" stroke="#444" strokeWidth="1.600" />
            <circle cx="5" cy="4.500" r="2.600" fill="#fff" stroke="#55a3ac" strokeWidth="1.300" />
            <path d="M3 11.500h13V8l-6 2.500z" fill="#c23320" />
            <path d="M0 12h8l-8 4z" fill="#3558c8" />
            <path d="M0 11.500h11" stroke="#666" />
        </>
    ),
    tag: (
        <>
            <path d="M1 2l14-1v9H6l-5 4z" fill="#f6e56c" stroke="#a18d28" />
            <text x="3" y="8" fontSize="7" fontWeight="700" fill="#333" fontFamily="Liberation Sans">XX</text>
        </>
    ),
    tags: (
        <g fill="#f3dd6c" stroke="#7d6b22" strokeWidth=".9">
            <path d="M1 1h6v4H3l-2 1zM10 1h5v4h-3l-2 1zM1 9h6v4H3l-2 1zM10 9h5v4h-3l-2 1z" />
        </g>
    ),
};

const TreeRow: React.FC<{ r: Row; index: number }> = ({ r, index }) => (
    <li className="flex h-[18px] items-center">
        {Array.from({ length: r.d + 1 }, (_, level) => {
            const own = level === r.d;
            const goesOn = continues(index, level);
            return (
                <svg key={level} viewBox="0 0 19 18" className="h-[18px] w-[19px] shrink-0">
                    {(own || goesOn) && <path d={goesOn ? 'M9.500 0v18' : 'M9.500 0v11'} stroke="#808080" strokeDasharray="1 1" />}
                    {own && <path d="M10 10.500h9" stroke="#808080" strokeDasharray="1 1" />}
                    {own && r.exp && (
                        <>
                            <path d="M5.500 6.500h8v8h-8z" fill="#fff" stroke="#919191" />
                            <path d={r.exp === '+' ? 'M7 10.500h5M9.500 8v5' : 'M7 10.500h5'} stroke="#2b4fa0" />
                        </>
                    )}
                </svg>
            );
        })}
        <label className="ml-[3px] flex items-center text-[11px] whitespace-nowrap text-black">
            <span className="grid size-[13px] place-items-center">
                <input
                    type={r.kind === 'radio' ? 'radio' : 'checkbox'}
                    name={r.kind === 'radio' ? groupOf(index) : undefined}
                    defaultChecked={r.state === 'on'}
                    ref={(el) => {
                        if (el) el.indeterminate = r.state === 'mixed';
                    }}
                    className={clsx(
                        'peer [grid-area:1/1] size-[13px] appearance-none border border-[#4a4e58]',
                        r.kind === 'radio' ? 'rounded-full bg-linear-to-br from-[#d3d8e4] to-white' : 'bg-linear-to-br from-white to-[#d3d9e5]',
                    )}
                />
                {r.kind === 'radio' && <span className="pointer-events-none hidden [grid-area:1/1] size-[5px] rounded-full bg-black peer-checked:block" />}
                {r.kind === 'check' && (
                    <>
                        <svg viewBox="0 0 9 9" className="pointer-events-none hidden [grid-area:1/1] size-[9px] peer-checked:block">
                            <path d="M1 4l2.500 3L8 1" fill="none" stroke="#000" strokeWidth="1.800" />
                        </svg>
                        <span className="pointer-events-none hidden [grid-area:1/1] size-[7px] bg-[#949494] peer-indeterminate:block" />
                    </>
                )}
            </span>
            <svg viewBox="0 0 16 16" className="ml-[2px] mr-[5px] size-4 shrink-0">{TREE_ICONS[r.icon]}</svg>
            <span>
                {r.text}
                {r.sub && <sub className="bottom-[-2px] pl-px text-[10px]">{r.sub}</sub>}
            </span>
        </label>
    </li>
);

const PANEL_TABS = [
    { label: 'Données', icon: 'tabData' },
    { label: 'Afficher', icon: 'tabShow' },
    { label: 'Vues', icon: 'tabViews' },
    { label: 'Résultats', icon: 'surfResult' },
];

const Navigator = () => (
    <aside className="flex w-[346px] shrink-0 flex-col">
        <div className="flex h-[20px] items-center border-t border-[#a5abb6] bg-[#e6ecf6] pl-1 text-[11px] text-[#4b4f5c]">
            <h2 className="flex-1">Navigateur de projet - Résultats</h2>
            <button aria-label="Épingler" className="mr-2">
                <svg viewBox="0 0 9 9" className="size-[9px]"><path d="M2 5.500V.5h5v5M0 5.500h9M4.500 6v3M5.500 1v4" fill="none" stroke="#555" /></svg>
            </button>
            <button aria-label="Fermer" className="mr-[5px]">
                <svg viewBox="0 0 9 9" className="size-[9px]"><path d="M1 1l7 7M8 1L1 8" stroke="#555" strokeWidth="1.200" /></svg>
            </button>
        </div>
        <div className="flex min-h-0 flex-1 border-t border-r border-b border-[#8e939c] bg-[#e9eef7] pt-px pr-[3px] pl-[3px]">
            <ul className="min-w-0 flex-1 overflow-hidden bg-[#fdfcf4] pl-[2px]">
                {TREE.map((r, i) => <TreeRow key={i} r={r} index={i} />)}
            </ul>
            <div className="flex w-[16px] flex-col items-center bg-[#f0f0f0]">
                <svg viewBox="0 0 9 6" className="my-[6px] h-[6px] w-[9px]"><path d="M1 5l3.500-3.500L8 5" fill="none" stroke="#505050" strokeWidth="1.800" /></svg>
                <div className="mt-[147px] w-full flex-1 bg-[#cdcdcd]" />
                <svg viewBox="0 0 9 6" className="my-[6px] h-[6px] w-[9px]"><path d="M1 1l3.500 3.500L8 1" fill="none" stroke="#505050" strokeWidth="1.800" /></svg>
            </div>
        </div>
        <div className="flex h-[23px] bg-[#cfd4de] pl-[3px] text-[11px] text-[#4b4f5c]" role="tablist">
            {PANEL_TABS.map((t, i) => (
                <button
                    key={t.label}
                    role="tab"
                    className={clsx('mr-[4px] flex h-5 items-center gap-px pr-[3px] pl-[2px]', i === 3 && 'rounded-b border border-t-0 border-[#a8dfe3] bg-[#f2f5fa]')}
                >
                    <ToolIcon name={t.icon} />
                    {t.label}
                </button>
            ))}
        </div>
    </aside>
);

/* ---------- model view ---------- */

const OX = 557.5;
const OY = 429;
const PX = 1007;
const PY = 240.500;
const SLOPE = 0.0615;
const BAY = 146.300;
const FAR = 1600;

const Triad: React.FC<{ x: number; y: number; len: number }> = ({ x, y, len }) => (
    <g fontSize="10" fontFamily="Liberation Sans">
        <path d={`M${x} ${y}l30 2`} stroke="#ff0000" strokeWidth="2" />
        <path d={`M${x + 28} ${y - 2}l9 4-9 3z`} fill="#c00000" />
        <path d={`M${x} ${y}l-9 4`} stroke="#00e000" strokeWidth="2" />
        <path d={`M${x - 7} ${y + 1}l2 4-10 2z`} fill="#009000" />
        <path d={`M${x} ${y}v${len - 8}`} stroke="#0000e0" strokeWidth="2" />
        <path d={`M${x - 2.500} ${y + len - 10}h5l-2.500 11z`} fill="#0000a0" />
        <text x={x + 44} y={y + 6} fill="#ff0000">X</text>
        <text x={x - 21} y={y + 10} fill="#00d000">Y</text>
        <text x={x - 3} y={y + len + 14} fill="#0000ff">Z</text>
    </g>
);

const ModelView = () => (
    <section className="relative min-h-0 flex-1 overflow-hidden border-t-2 border-l-2 border-[#6b6b6b] bg-[#fdfdfd]">
        <svg className="block h-full w-full" aria-label="Modèle">
            <g transform="translate(-352 -101)" fill="none">
                <path d={`M${OX} ${OY}L${PX} ${PY}V2000H${OX}z`} fill="#ffc17f" />
                <path d={`M${OX} ${OY}L${PX} ${PY}L${FAR} ${PY + (FAR - PX) * SLOPE}V${OY + (FAR - OX) * SLOPE}z`} fill="#bf803f" />
                <path d={`M${OX} ${OY}L${PX} ${PY}V${OY + (PX - OX) * SLOPE}z`} fill="#c0711d" />

                {/* finite element mesh */}
                <g stroke="#a0a0a4" strokeDasharray="1 1">
                    {[1, 2, 3, 4, 5, 6, 7].map((i) => {
                        const x = OX + (i * (PX - OX)) / 8;
                        const y = OY - (i * (OY - PY)) / 8;
                        const edge = OY + (x - OX) * SLOPE;
                        return (
                            <g key={i}>
                                <path d={`M${x} ${y}V${edge}`} stroke="#a5632a" />
                                <path d={`M${x} ${edge}V2000`} />
                                <path d={`M${x} ${y}L${FAR} ${y + (FAR - x) * SLOPE}`} />
                            </g>
                        );
                    })}
                    <path d="M871 452L1007 395" stroke="#a5632a" />
                    <path d="M557.500 583.500L871 452" />
                    {[2, 3, 4, 5].map((k) => <path key={k} d={`M${OX} ${OY + k * 154.500}L${PX} ${PY + k * 154.500}`} />)}
                    {[1, 2, 3, 4, 5, 6].map((k) => (
                        <path key={k} d={`M${OX + k * BAY} ${OY + k * 9}L${PX + k * BAY} ${PY + k * 9}`} />
                    ))}
                </g>

                {/* outlines */}
                <path d="M352 416L557.500 429V101" stroke="#2a8080" />
                <path d={`M${OX} ${OY}V2000`} stroke="#333" />
                <path d={`M${OX} ${OY}L${FAR} ${OY + (FAR - OX) * SLOPE}M${PX} ${PY}L${FAR} ${PY + (FAR - PX) * SLOPE}`} stroke="#000" strokeWidth="1.300" />
                <path d="M1006.500 241V457" stroke="#7a4a14" />
                <path d="M1006.500 457V2000" stroke="#333" />

                {/* release box */}
                <g stroke="#7f8030">
                    <path d="M1079.500 245V322.500L933.500 313.500V271.500M1079.500 322.500L790 443.500" />
                    <path d="M933.500 313.500L645 433.500" />
                    <path d="M645 433.500L557 470" stroke="#80c080" />
                </g>
                <path
                    d="M484.500 347L630.500 355.500V510.500L484.500 501.500zL933.500 159L1079.500 167.500L630.500 355.500M933.500 159V271.500M1079.500 167.500V245M484.500 501.500L557 470M630.500 510.500L790 443.500"
                    stroke="#00ffff"
                />
                <path d={`M${OX} ${OY}L${PX} ${PY}`} stroke="#ff0a0a" strokeWidth="1.300" />
                <rect x="1005" y="239" width="3" height="3" fill="#a00000" />

                <Triad x={557.500} y={429} len={38} />
                <Triad x={407} y={799} len={39} />

                {[[849, 137], [1141, 156], [1434, 174], [849, 756], [1141, 774], [1434, 792]].map(([x, y]) => (
                    <rect key={`${x}-${y}`} x={x} y={y} width="1" height="1" fill="#222" />
                ))}
            </g>
        </svg>
        <p className="absolute top-[5px] left-1 font-[Liberation_Sans,sans-serif] text-[11px] leading-[14px] text-black">
            Articulations linéiques u-x [mm]<br />
            Libérations linéique v-z [kN/m]<br />
            CC1 : Self-Weight
        </p>
        <p className="absolute bottom-[5px] left-1 font-[Liberation_Sans,sans-serif] text-[11px] leading-[14px] text-black">
            Max v-z: 0.00, Min v-z: 0.00 kN/m
        </p>
    </section>
);

/* ---------- results table ---------- */

type Cell = { v: string; axis?: number; bar?: number };

const RESULTS: { no?: string; from?: string; to?: string; x: string; n: Cell; vy: Cell; vz: Cell; mx: Cell }[] = [
    { no: '1', from: '4', to: '8', x: '0.000', n: { v: '0.049', axis: 42, bar: 19 }, vy: { v: '0.001', axis: 33, bar: 44 }, vz: { v: '0.000' }, mx: { v: '-0.383', axis: 48, bar: -42 } },
    { x: '0.500', n: { v: '0.088', axis: 42, bar: 37 }, vy: { v: '0.000', axis: 33, bar: 0 }, vz: { v: '0.000' }, mx: { v: '0.028', axis: 48, bar: 3 } },
    { x: '1.000', n: { v: '0.079', axis: 42, bar: 34 }, vy: { v: '-0.000', axis: 33, bar: 0 }, vz: { v: '0.000' }, mx: { v: '0.019', axis: 48, bar: 1 } },
    { x: '1.500', n: { v: '0.041', axis: 42, bar: 17 }, vy: { v: '-0.000', axis: 33, bar: 0 }, vz: { v: '0.000' }, mx: { v: '0.010', axis: 48, bar: 0 } },
];

const BarCell: React.FC<{ cell: Cell }> = ({ cell }) => {
    const { v, axis, bar = 0 } = cell;
    return (
        <td className="border border-[#a0a0a0] bg-white p-0">
            <div className="grid items-center">
                {axis !== undefined && (
                    <span
                        className={clsx('[grid-area:1/1] h-[11px] border-[#b8b8b8]', bar < 0 ? 'border-r bg-[#ffbcbc]' : 'border-l bg-[#d9e4fc]')}
                        style={{ marginLeft: bar < 0 ? axis + bar : axis, width: Math.abs(bar) + 1 }}
                    />
                )}
                <span className="z-10 [grid-area:1/1] pr-1 text-right">{v}</span>
            </div>
        </td>
    );
};

const SHEETS = [
    'Surfaces - Déformations maximales',
    'Surfaces - Déformations - von Mises',
    'Surfaces - Déformations - Tresca',
    'Surfaces - Déformations - Rankine',
    'Surfaces - Déformations - Bach',
    'Surfaces - Déformations plastiques',
    'Surfaces - Critère',
    'Libérations linéiques - Dé',
];

const ResultsPanel = () => {
    const head = 'border-x border-[#a0a0a0] p-0 font-normal';
    return (
        <section className="flex h-[218px] shrink-0 flex-col border-t border-white bg-[#f0f0f0]">
            <div className="h-[5px] border-b border-[#e9edf5] bg-[#cfd4de]" />
            <h2 className="h-5 bg-[#b9c0ca] pl-1 text-[11px] leading-[20px] text-[#4b4f5c]">4.52 Libérations linéiques - Efforts</h2>
            <div className="flex h-[25px] items-center border-b border-[#555] bg-linear-to-b from-[#e9eefa] to-[#d2d7e0] pl-[9px]">
                <Tools items="tGreen tSplit tDown *tDiag tWave | tLeft tRight | *hookR *hookL | tRows tEdit |" />
                <CasePicker className="mr-[2px] ml-[2px] w-[134px]" />
                <Tools items="| prevBlue next | filter | infoGrey | *bars | excel | calc" />
            </div>
            <div className="min-h-0 flex-1 border-l border-[#8a8a8a] pt-[2px] pl-px font-[Liberation_Sans,sans-serif] text-[11px] leading-[14px] text-[#14142e]">
                <table className="w-full table-fixed border-collapse">
                    <colgroup>
                        <col className="w-[46px]" />
                        <col className="w-[66px]" />
                        <col className="w-[66px]" />
                        <col className="w-[72px]" />
                        <col className="w-[84px]" />
                        <col className="w-[84px]" />
                        <col className="w-[84px]" />
                        <col className="w-[96px]" />
                        <col />
                    </colgroup>
                    <thead>
                        <tr className="h-[15px] bg-[#e2e2e2]">
                            <th rowSpan={3} className="border border-[#6e6e6e] p-0 text-[10px] font-normal whitespace-nowrap">Libération<br />n°</th>
                            {'ABCDEFG'.split('').map((c) => (
                                <th key={c} className={clsx('border border-[#6e6e6e] p-0 font-normal', c === 'A' && 'bg-[#0078d9] text-white')}>{c}</th>
                            ))}
                            <th className="border border-[#a0a0a0] p-0" />
                        </tr>
                        <tr className="h-4">
                            <th className={head}>D'origine</th>
                            <th className={head}>Libéré</th>
                            <th className={head}>Position</th>
                            <th colSpan={3} className={head}>Libération d'efforts [kN/m]</th>
                            <th className={head}>Moment</th>
                            <th className={head} />
                        </tr>
                        <tr className="h-4">
                            <th className={head}>Ligne n°</th>
                            <th className={head}>Ligne n°</th>
                            <th className={head}>x [m]</th>
                            <th className={head}>n</th>
                            <th className={head}>v<sub className="bottom-[-2px] pl-px text-[11px]">y</sub></th>
                            <th className={head}>v<sub className="bottom-[-2px] pl-px text-[11px]">z</sub></th>
                            <th className={head}>m<sub className="bottom-[-2px] pl-px text-[11px]">x</sub> [kNm/m]</th>
                            <th className={head} />
                        </tr>
                    </thead>
                    <tbody>
                        {RESULTS.map((r) => (
                            <tr key={r.x} className="h-4">
                                <td className={clsx('border border-[#6e6e6e] p-0 text-center', r.no ? 'bg-[#0078d9] text-white' : 'bg-[#e2e2e2]')}>{r.no}</td>
                                <td className="border border-[#a0a0a0] bg-white p-0 text-center">{r.from}</td>
                                <td className="border border-[#a0a0a0] bg-white p-0 text-center">{r.to}</td>
                                <td className="border border-[#a0a0a0] bg-white p-0 pr-1 text-right">{r.x}</td>
                                <BarCell cell={r.n} />
                                <BarCell cell={r.vy} />
                                <BarCell cell={r.vz} />
                                <BarCell cell={r.mx} />
                                <td className="border border-[#a0a0a0] p-0" />
                            </tr>
                        ))}
                    </tbody>
                </table>
            </div>
            <div className="flex h-[17px] overflow-hidden border-t border-[#6e6e6e] font-[Liberation_Sans,sans-serif] text-[10px] text-black" role="tablist">
                {SHEETS.map((s) => (
                    <button key={s} role="tab" className="h-4 shrink-0 rounded-b-[3px] border-r border-b border-[#6e6e6e] bg-[#e4e4e4] px-[6px] leading-[14px]">{s}</button>
                ))}
            </div>
            <div className="h-5 border-b border-[#9aa0aa]" />
        </section>
    );
};

/* ---------- table list popup ---------- */

const TABLES = [
    '4.4.1 Barres - Rapports de déformation plastique locale',
    '4.4.2 Barres - Forme',
    '4.5 Barres - Déformations globales',
    '4.6 Barres - Efforts internes',
    '4.7 Barres - forces de contact',
    '4.8 Barres - Déformations',
    '4.9 Barres - Coefficients pour le flambement',
    '4.10 Élancements de barre',
    '4.11 Ensemble de barres - Efforts internes',
    '4.12 Sections - Efforts internes',
    '4.13 Surfaces - Déformations locales',
    '4.13.1 Surfaces - Forme',
    '4.14 Surfaces - Déformations globales',
    '4.15 Surfaces - Efforts internes de base',
    '4.16 Surfaces - Efforts internes principaux',
    '4.17 Surfaces - Efforts internes de calcul',
    '4.18 Surfaces - Contraintes de base',
    '4.19 Surfaces - Contraintes principales',
    '4.20 Surfaces - Autres contraintes',
    '4.21 Surfaces - Contraintes de contact',
    '4.22 Surfaces - Contraintes équivalentes - von Mises',
    '4.23 Surfaces - Contraintes équivalentes - Tresca',
    '4.24 Surfaces - Contraintes équivalentes - Rankine',
    '4.25 Surfaces - Contraintes équivalentes - Bach',
    '4.26 Surfaces - Déformations de base',
    '4.27 Surfaces - Déformations principales',
    '4.28 Surfaces - Déformations maximales',
    '4.29 Surfaces - Déformations - von Mises',
    '4.30 Surfaces - Déformations - Tresca',
    '4.31 Surfaces - Déformations - Rankine',
    '4.32 Surfaces - Déformations - Bach',
    '4.33 Surfaces - Déformations plastiques',
    '4.34 Surfaces - Déformations à la rupture',
    '4.35 Surfaces - Critère',
    '4.36 Solides - Déformations',
    '4.37 Solides - contraintes',
    '4.38 Solides - Déformations',
    '4.39 Solides - Déformations plastiques',
    '4.40 Solides - Critère',
    '4.41 Solides - pression du gaz',
    "4.42 Solide - Contrainte au centre de gravité d'EF",
    "4.43 Solide - Déformation au centre de gravité d'EF",
    '4.44 Solide - Centre de pression de gaz',
    '4.45 Articulations linéiques - Déformations',
    '4.46 Articulations linéiques - Efforts',
    '4.47 Articulations de barre - Déformations',
    '4.48 Articulations de barres - Efforts',
    '4.49 Libérations nodales - Déformation',
    '4.50 Libérations nodales - Efforts',
    '4.51 Libérations linéiques - Déformations',
    '4.52 Libérations linéiques - Efforts',
];

const isEnabled = (i: number) => (i >= 10 && i <= 33 && i !== 19 && i !== 32) || i >= 49;

const TableMenu = () => (
    <div className="absolute inset-y-0 right-px w-[335px] border-l border-[#f4f7fc] bg-linear-to-r from-[#e8edf7] from-[23px] to-[#fbfbfb] to-[23px] pt-[2px] pb-[18px]">
        <ul role="menu" className="flex h-full flex-col text-[11px]">
            {TABLES.map((t, i) => {
                const last = i === TABLES.length - 1;
                return (
                    <li key={t} role="none" className="min-h-0 flex-1">
                        <button
                            role="menuitem"
                            disabled={!isEnabled(i)}
                            className={clsx(
                                'flex h-full w-full items-center whitespace-nowrap',
                                isEnabled(i) ? 'text-[#3a3c46]' : 'text-[#a4a4a4]',
                                last && 'rounded-[2px] bg-linear-to-b from-[#fff9e0] via-[#ffe08a] to-[#ffd640] shadow-[inset_0_0_0_1px_#dcc98f]',
                            )}
                        >
                            <span className="flex h-full w-[23px] shrink-0 items-center border-r border-[#c9cfda]">
                                {last && (
                                    <span className="ml-px flex size-[19px] items-center justify-center rounded-[2px] border border-[#f2954a] bg-[#ffdf9b]">
                                        <svg viewBox="0 0 10 12" className="h-3 w-[10px]"><path d="M2 6l2 4L8 1" fill="none" stroke="#1f2f8f" strokeWidth="1.800" /></svg>
                                    </span>
                                )}
                            </span>
                            <span className="pl-[5px]">{t}</span>
                        </button>
                    </li>
                );
            })}
        </ul>
    </div>
);

/* ---------- page ---------- */

const SWITCHES = [
    { label: 'SAISIE', cls: 'w-[38px]', on: true },
    { label: 'GRILLE', cls: 'w-[42px]', on: true },
    { label: 'CARTES', cls: 'w-[56px]', on: true },
    { label: "SAISIE D'OB.", cls: 'w-[72px]', on: true },
    { label: 'GLIGNES', cls: 'w-[52px]', on: false },
    { label: 'DXF', cls: 'w-[28px]', on: false },
];

const App: React.FC = () => (
    <div className="relative flex h-screen w-full flex-col overflow-hidden bg-[#cfd4de] font-['Open_Sans','Noto_Sans',sans-serif]">
        <svg width="0" height="0" className="absolute">
            <defs>
                <linearGradient id="rainbow" x1=".3" y1="1" x2=".55" y2="0">
                    <stop offset=".1" stopColor="#f01818" />
                    <stop offset=".3" stopColor="#ffe000" />
                    <stop offset=".5" stopColor="#28d828" />
                    <stop offset=".7" stopColor="#10c8e8" />
                    <stop offset=".85" stopColor="#1020b8" />
                </linearGradient>
            </defs>
        </svg>
        <Header />
        <div className="flex min-h-0 flex-1">
            <Navigator />
            <main className="ml-1 flex min-w-0 flex-1 flex-col">
                <ModelView />
                <ResultsPanel />
            </main>
        </div>
        <footer className="flex h-[21px] shrink-0 items-end justify-end gap-[2px] bg-linear-to-b from-[#dfe2e8] via-[#a8adb6] to-[#c3c8d1] pr-[463px] font-[Roboto,sans-serif] text-[11px] text-[#26272d]">
            {SWITCHES.map((s) => (
                <button
                    key={s.label}
                    className={clsx(
                        'h-[19px] border-t border-l whitespace-nowrap',
                        s.cls,
                        s.on ? 'border-r border-t-black border-r-white border-l-black' : 'border-r border-t-white border-r-[#888] border-l-white',
                    )}
                >
                    {s.label}
                </button>
            ))}
        </footer>
        <TableMenu />
    </div>
);

export default App;
